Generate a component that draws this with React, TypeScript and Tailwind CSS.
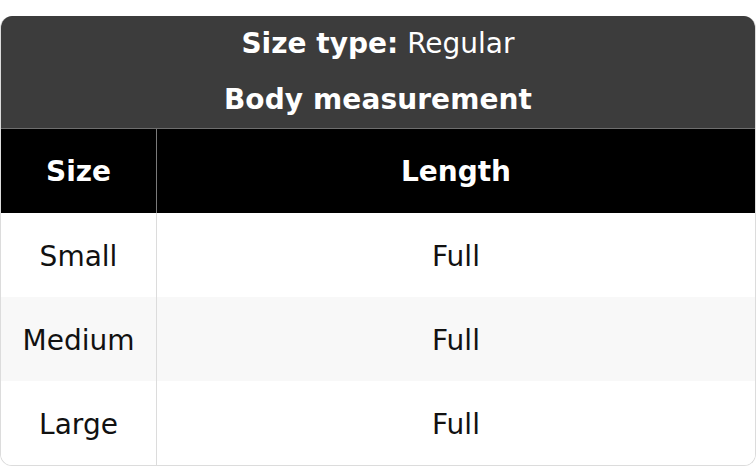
import React from "react";

const rows = [
  { size: "Small", length: "Full", bg: "bg-white" },
  { size: "Medium", length: "Full", bg: "bg-[#f8f8f8]" },
  { size: "Large", length: "Full", bg: "bg-white" },
];

export default function App() {
  return (
    <div
      className="w-[756px] h-[468px] bg-white pt-4"
      style={{ fontFamily: '"DejaVu Sans", sans-serif' }}
    >
      <div className="w-[756px] rounded-xl overflow-hidden border-x border-b border-[#dcdcdc] text-[28px] leading-none">
        <div className="bg-[#3c3c3c] text-white">
          <div className="h-14 flex items-center justify-center">
            <span className="font-bold">Size type:</span>
            <span className="ml-[9px]">Regular</span>
          </div>
          <div className="h-14 flex items-center justify-center font-bold tracking-[0.1px]">
            Body measurement
          </div>
        </div>
        <div className="grid grid-cols-[156px_1fr] bg-black text-white font-bold border-t border-[#6e6e6e]">
          <div className="h-[84px] pt-[2px] flex items-center justify-center border-r border-[#7a7a7a]">
            Size
          </div>
          <div className="h-[84px] pt-[2px] flex items-center justify-center">Length</div>
        </div>
        {rows.map((r) => (
          <div
            key={r.size}
            className={`grid grid-cols-[156px_1fr] ${r.bg} text-[#111]`}
          >
            <div className="h-[84px] pt-[3px] flex items-center justify-center border-r border-[#dcdcdc]">
              {r.size}
            </div>
            <div className="h-[84px] pt-[3px] flex items-center justify-center">
              {r.length}
            </div>
          </div>
        ))}
      </div>
    </div>
  );
}
